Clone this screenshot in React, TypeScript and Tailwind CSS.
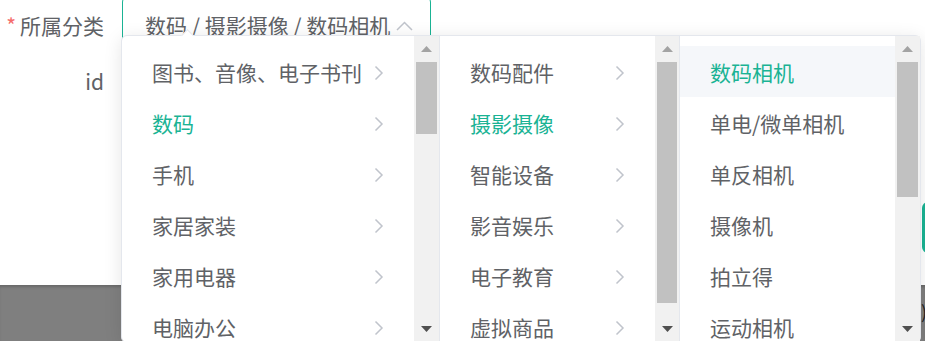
import type { ReactNode } from 'react'

const TEAL = '#1ab394'

type Node = { label: string; active?: boolean; hover?: boolean; leaf?: boolean }

const col1: Node[] = [
  { label: '图书、音像、电子书刊' },
  { label: '数码', active: true },
  { label: '手机' },
  { label: '家居家装' },
  { label: '家用电器' },
  { label: '电脑办公' },
]

const col2: Node[] = [
  { label: '数码配件' },
  { label: '摄影摄像', active: true },
  { label: '智能设备' },
  { label: '影音娱乐' },
  { label: '电子教育' },
  { label: '虚拟商品' },
]

const col3: Node[] = [
  { label: '数码相机', active: true, hover: true, leaf: true },
  { label: '单电/微单相机', leaf: true },
  { label: '单反相机', leaf: true },
  { label: '摄像机', leaf: true },
  { label: '拍立得', leaf: true },
  { label: '运动相机', leaf: true },
]

function Chevron() {
  return (
    <svg width="10" height="16" viewBox="0 0 10 16" fill="none">
      <polyline points="1.5,1.5 8,8 1.5,14.5" stroke="#c0c4cc" strokeWidth="1.5" />
    </svg>
  )
}

// fake classic scrollbar, the menus are clipped by the viewport
function ScrollTrack({ thumb, width }: { thumb: string; width: string }) {
  return (
    <div className={`flex h-full flex-col bg-[#f1f1f1] ${width}`}>
      <div className="flex h-[26px] items-center justify-center">
        <svg width="11" height="6" viewBox="0 0 11 6">
          <polygon points="0,6 5.5,0 11,6" fill="#a3a3a3" />
        </svg>
      </div>
      <div className={`mx-[2px] bg-[#c1c1c1] ${thumb}`} />
      <div className="flex-1" />
      <div className="flex h-[26px] items-center justify-center">
        <svg width="11" height="6" viewBox="0 0 11 6">
          <polygon points="0,0 5.5,6 11,0" fill="#505050" />
        </svg>
      </div>
    </div>
  )
}

function Menu({
  nodes,
  width,
  track,
  thumb,
  last,
}: {
  nodes: Node[]
  width: string
  track: string
  thumb: string
  last?: boolean
}) {
  return (
    <div className={`flex h-full ${last ? '' : 'border-r border-[#e4e7ed]'}`}>
      <ul className={`pt-[10px] ${width}`}>
        {nodes.map((n) => (
          <li
            key={n.label}
            className={`flex h-[51px] items-center justify-between pl-[30px] pr-[30px] pt-[3px] text-[21px] ${
              n.active ? 'text-[#1ab394]' : 'text-[#606266]'
            } ${n.hover ? 'bg-[#f5f7fa]' : ''}`}
          >
            <span>{n.label}</span>
            {!n.leaf && <Chevron />}
          </li>
        ))}
      </ul>
      <ScrollTrack thumb={thumb} width={track} />
    </div>
  )
}

function FormRow({ label, required, children, className }: { label: string; required?: boolean; children?: ReactNode; className?: string }) {
  return (
    <div className={`flex items-center ${className ?? ''}`}>
      <label className="w-[122px] shrink-0 pr-[18px] text-right text-[21px] text-[#606266]">
        {required && <span className="mr-[4px] text-[#f56c6c]">*</span>}
        {label}
      </label>
      {children}
    </div>
  )
}

export default function App() {
  return (
    <div className="relative flex h-[341px] w-[925px] flex-col overflow-hidden bg-white font-['Noto_Sans_CJK_SC','Liberation_Sans',sans-serif]">
      {/* form */}
      <FormRow label="所属分类" required className="-mt-[4px] h-[60px]">
        <div className="flex h-[60px] w-[309px] items-center justify-between rounded-[6px] border border-[#1ab394] pl-[22px] pr-[17px]">
          <span className="text-[21px] text-[#606266]">数码 / 摄影摄像 / 数码相机</span>
          <svg width="17" height="10" viewBox="0 0 17 10" fill="none">
            <polyline points="1,9 8.5,1.5 16,9" stroke="#c0c4cc" strokeWidth="1.5" />
          </svg>
        </div>
      </FormRow>
      <FormRow label="id" className="h-[52px]" />

      {/* page content underneath the popper */}
      <div className="mt-auto h-[56px] bg-[#7f7f7f] shadow-[inset_0_3px_3px_-1px_rgba(0,0,0,0.18)]" />
      <div className="absolute left-[922px] top-[202px] h-[51px] w-[40px] rounded-l-[6px]" style={{ backgroundColor: TEAL }} />
      <span className="absolute left-[921px] top-[298px] text-[18px] text-[#222]">)</span>

      {/* cascader dropdown */}
      <div className="absolute left-[121px] top-[35px] flex h-[308px] rounded-[6px] border border-[#e4e7ed] bg-white shadow-[0_3px_18px_rgba(0,0,0,0.1)]">
        <div className="absolute -top-[5px] left-[61px] h-[9px] w-[9px] rotate-45 border-l border-t border-[#e4e7ed] bg-white" />
        <Menu nodes={col1} width="w-[292px]" track="w-[25px]" thumb="h-[72px]" />
        <Menu nodes={col2} width="w-[215px]" track="w-[24px]" thumb="h-[241px]" />
        <Menu nodes={col3} width="w-[215px]" track="w-[25px]" thumb="h-[135px]" last />
      </div>
    </div>
  )
}
